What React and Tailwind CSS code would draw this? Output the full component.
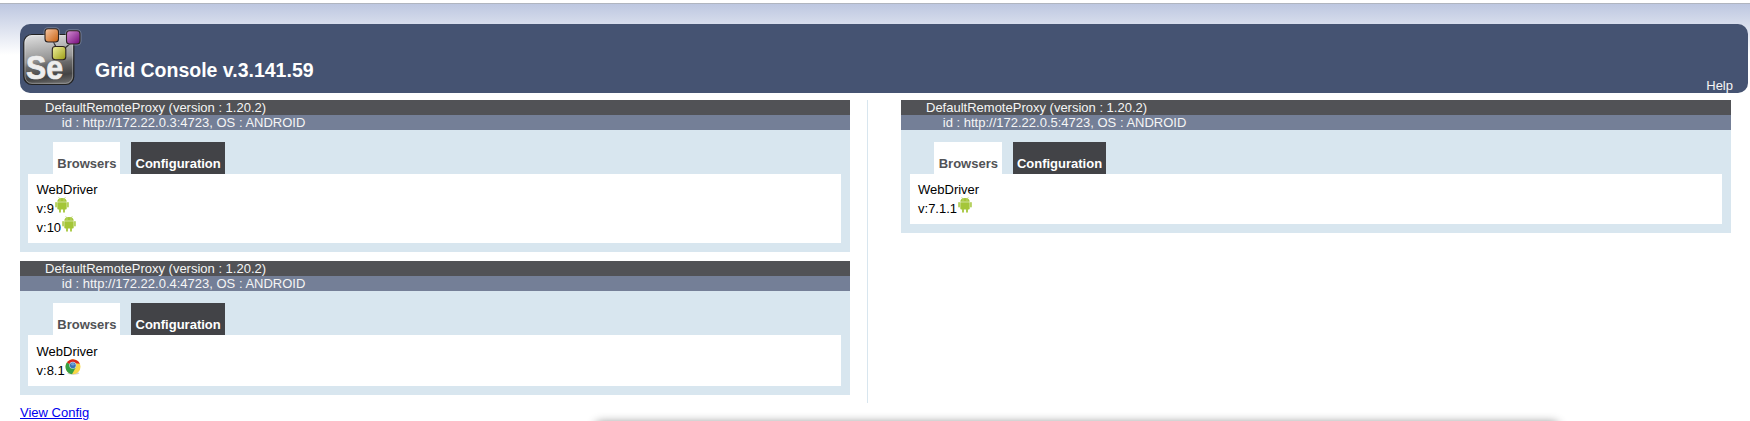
function SeleniumLogo() {
  return (
    <svg className="block h-[66px] w-[66px]" viewBox="0 0 66 66">
      <defs>
        <linearGradient id="body" x1="0.35" y1="0" x2="0.5" y2="1">
          <stop offset="0" stopColor="#dcdcdc" />
          <stop offset="0.5" stopColor="#949494" />
          <stop offset="0.6" stopColor="#6c6c6c" />
          <stop offset="0.85" stopColor="#444" />
          <stop offset="1" stopColor="#666" />
        </linearGradient>
        <linearGradient id="orange" x1="0" y1="0" x2="1" y2="1">
          <stop offset="0" stopColor="#f8c8a4" />
          <stop offset="1" stopColor="#c8600f" />
        </linearGradient>
        <linearGradient id="purple" x1="0" y1="0" x2="1" y2="1">
          <stop offset="0" stopColor="#d48fd4" />
          <stop offset="1" stopColor="#73087a" />
        </linearGradient>
        <linearGradient id="yellow" x1="0" y1="0" x2="1" y2="1">
          <stop offset="0" stopColor="#f3f3a0" />
          <stop offset="1" stopColor="#9a9a10" />
        </linearGradient>
      </defs>
      <rect x="3.8" y="12.5" width="50" height="50" rx="8" fill="url(#body)" stroke="#222" strokeWidth="1.2" />
      <rect x="5" y="13.7" width="47.6" height="47.6" rx="7" fill="none" stroke="#fff" strokeOpacity="0.3" />
      <text x="6" y="56.8" fontFamily="Liberation Sans, Arial, sans-serif" fontWeight="700" fontSize="33" textLength="37" lengthAdjust="spacingAndGlyphs" fill="#eee" stroke="#eee" strokeWidth="0.7">Se</text>
      <path d="M33 19L36 25M51 21L45 26" stroke="#333" strokeWidth="1.3" />
      <g fill="none" stroke="#c8d0e0" strokeOpacity="0.35" strokeWidth="3">
        <rect x="25" y="6.8" width="13.5" height="13.2" rx="3" />
        <rect x="46.5" y="8.8" width="13.5" height="13.2" rx="3" />
      </g>
      <g stroke="#2c2320" strokeWidth="1.1">
        <rect x="25" y="6.8" width="13.5" height="13.2" rx="3" fill="url(#orange)" />
        <rect x="46.5" y="8.8" width="13.5" height="13.2" rx="3" fill="url(#purple)" />
        <rect x="32.3" y="24.5" width="13.5" height="13.2" rx="3" fill="url(#yellow)" />
      </g>
    </svg>
  );
}

function AndroidIcon() {
  return (
    <svg className="-mt-0.5 ml-[0.4px] block h-4 w-4" viewBox="0 0 16 16">
      <g fill="#a4c639">
        <path d="M3.3 4.7C3.3 2.5 5 1 8 1s4.700 1.500 4.700 3.700z" />
        <path d="M3.300 5.200h9.400v6.300q0 1-1 1H4.300q-1 0-1-1z" />
        <rect x="1.300" y="5" width="1.500" height="5.400" rx="0.750" />
        <rect x="13.200" y="5" width="1.500" height="5.400" rx="0.750" />
        <rect x="5.100" y="11.500" width="1.800" height="4.200" rx="0.900" />
        <rect x="9.100" y="11.500" width="1.800" height="4.200" rx="0.900" />
      </g>
      <path d="M4.700 0.300L5.600 1.800M11.300 0.300L10.400 1.800" stroke="#a4c639" strokeWidth="0.600" />
      <circle cx="6" cy="3" r="0.450" fill="#fff" />
      <circle cx="10" cy="3" r="0.450" fill="#fff" />
    </svg>
  );
}

function ChromeIcon() {
  return (
    <svg className="-mt-0.5 block h-4 w-4" viewBox="0 0 16 16">
      <ellipse cx="8.300" cy="14.200" rx="6" ry="1.500" fill="#888" opacity="0.400" />
      <circle cx="8" cy="7.800" r="7.500" fill="#f7d748" />
      <path d="M7 7L2 3.300A7.500 7.500 0 0 0 7 15.200L10.500 9z" fill="#35a043" />
      <path d="M7 7L2 3.300A7.500 7.500 0 0 1 14.800 4.800L8 4z" fill="#d9251d" />
      <circle cx="7.800" cy="6.300" r="3.500" fill="#c9dcef" />
      <circle cx="7.800" cy="6.300" r="2.900" fill="#3972b5" />
      <ellipse cx="7.800" cy="5.300" rx="1.800" ry="1.200" fill="#6fa0d6" />
    </svg>
  );
}

function Proxy({ host, browsers, bodyClass, contentClass, browsersTab, configTab }) {
  return (
    <section className={`flex w-[830px] flex-col bg-[#d8e6ef] ${bodyClass}`}>
      <p className="h-[15px] bg-[#515256] pl-[25px] leading-[15px] text-[#f5f5f5]">
        DefaultRemoteProxy (version : 1.20.2)
      </p>
      <p className="h-[15px] bg-[#747f97] pl-[41.8px] leading-[15px] text-[#f5f5f5]">
        id : http://{host}:4723, OS : ANDROID
      </p>
      <div className="ml-[33px] mt-3 flex h-8 gap-[11px] font-bold leading-[15px]">
        <div className={`flex items-end bg-white pb-[3px] text-[#515256] ${browsersTab}`}>Browsers</div>
        <div className={`flex items-end bg-[#424347] pb-[3px] text-white ${configTab}`}>Configuration</div>
      </div>
      <div className={`mb-[9px] mr-[9px] flex-1 bg-white leading-[19px] ${contentClass}`}>
        <p>WebDriver</p>
        {browsers.map(({ version, Icon }) => (
          <div key={version} className="flex h-[19px]">
            <span>v:{version}</span>
            <Icon />
          </div>
        ))}
      </div>
    </section>
  );
}

export default function App() {
  return (
    <div className="h-[421px] overflow-hidden bg-white pt-[3px] font-['Liberation_Sans',Arial,sans-serif] text-[13px] text-black">
      <div className="flex h-[418px] flex-col border-t border-[#b0b5bf] bg-[linear-gradient(#bdc7e0_0px,#ffffff_51px)] pl-5 pt-5">
        <header className="flex h-[69px] w-[1728px] shrink-0 rounded-[10px] bg-[#455372]">
          <div className="-mt-0.5 h-[66px]"><SeleniumLogo /></div>
          <h1 className="ml-[9px] mt-[35px] text-[19.5px] font-bold leading-[23px] text-white">Grid Console v.3.141.59</h1>
          <a className="ml-auto mr-[15px] mt-[54px] h-[15px] leading-[15px] text-[#f5f5f5]">Help</a>
        </header>
        <main className="mt-[7px] flex h-[303px] shrink-0">
          <div className="flex w-[848px] shrink-0 flex-col gap-[9px] border-r border-[#d8e6ef]">
            <Proxy host="172.22.0.3" bodyClass="h-[152px]" browsersTab="w-[67px] pl-[4.300px]" configTab="w-[94px] pl-[4.500px]" contentClass="ml-2 pl-[8.500px] pt-1.5"
              browsers={[{ version: "9", Icon: AndroidIcon }, { version: "10", Icon: AndroidIcon }]} />
            <Proxy host="172.22.0.4" bodyClass="h-[134px]" browsersTab="w-[67px] pl-[4.300px]" configTab="w-[94px] pl-[4.500px]" contentClass="ml-2 pl-[8.500px] pt-[7px]"
              browsers={[{ version: "8.1", Icon: ChromeIcon }]} />
          </div>
          <div className="ml-[33px]">
            <Proxy host="172.22.0.5" bodyClass="h-[133px]" browsersTab="w-[68px] pl-[4.700px]" configTab="w-[93px] pl-[3.900px]" contentClass="ml-[9px] pl-2 pt-1.5"
              browsers={[{ version: "7.1.1", Icon: AndroidIcon }]} />
          </div>
        </main>
        <div className="mt-[2px] flex h-[15px] shrink-0">
          <a className="leading-[15px] text-[#0000ee] underline">View Config</a>
          <div className="ml-[506px] mt-[17px] h-3 w-[964px] rounded-lg shadow-[0_0_10px_#00000070]" />
        </div>
      </div>
    </div>
  );
}
